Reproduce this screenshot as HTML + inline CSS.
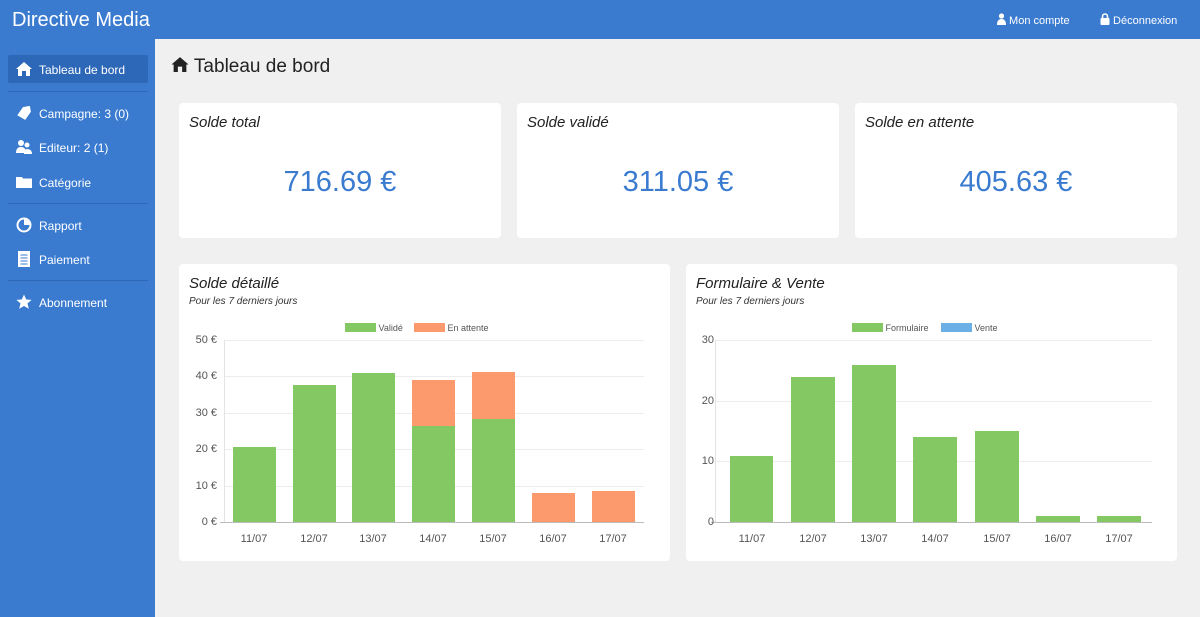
<!DOCTYPE html>
<html><head><meta charset="utf-8"><style>
*{margin:0;padding:0;box-sizing:border-box}
body{width:1200px;height:617px;overflow:hidden;background:#f0f0f0;font-family:"Liberation Sans",sans-serif;position:relative}
.a{position:absolute}
#top{left:0;top:0;width:1200px;height:39px;background:#3a7bd0;color:#fff}
#side{left:0;top:39px;width:155px;height:578px;background:#3a7bd0;color:#fff}
.nav{position:absolute;left:8px;width:140px;height:28px;font-size:12px;line-height:30px;padding-left:31px;color:#fff}
.ic{position:absolute;left:8px;top:6px;width:16px;height:16px}
.sep{position:absolute;left:8px;width:140px;height:1px;background:#2d68b8}
.card{position:absolute;background:#fff;border-radius:4px}
.ct{position:absolute;left:10px;top:11px;font-style:italic;font-size:15px;color:#222}
.big{position:absolute;width:100%;text-align:center;top:63px;font-size:29px;color:#3a7bd0}
.sub{position:absolute;left:10px;top:32px;font-style:italic;font-size:10px;color:#333}
.g{background:#84c863}.o{background:#fd9a6d}
.gl{position:absolute;height:1px;background:#ececec}
.yl{position:absolute;font-size:11px;color:#555;text-align:right;width:40px}
.xl{position:absolute;font-size:11px;color:#555;width:50px;text-align:center;top:533px}
.lg{position:absolute;font-size:9px;color:#555}
</style></head><body>
<div id="top" class="a">
<div class="a" style="left:12px;top:9px;font-size:20px">Directive Media</div>
<div class="a" style="left:997px;top:13px;font-size:11px">
<svg width="9" height="12" viewBox="0 0 9 12" style="vertical-align:-1px"><circle cx="4.5" cy="3" r="2.6" fill="#fff"/><path d="M0 12 Q0 6 4.5 6 Q9 6 9 12Z" fill="#fff"/></svg> Mon compte</div>
<div class="a" style="left:1100px;top:13px;font-size:11px">
<svg width="10" height="12" viewBox="0 0 10 12" style="vertical-align:-1px"><path d="M2.5 5V3.5a2.5 2.5 0 0 1 5 0V5" stroke="#fff" stroke-width="1.6" fill="none"/><rect x="0.5" y="5" width="9" height="7" rx="1" fill="#fff"/></svg> Déconnexion</div>
</div>
<div id="side" class="a">
<div class="nav" style="top:16px;background:#2d68b8;border-radius:2px"><svg class="ic" viewBox="0 0 16 16"><path d="M8 1 L0 8 L2 8 L2 15 L6 15 L6 10 L10 10 L10 15 L14 15 L14 8 L16 8Z" fill="#fff"/></svg>Tableau de bord</div>
<div class="sep" style="top:52px"></div>
<div class="nav" style="top:60px"><svg class="ic" viewBox="0 0 16 16"><path d="M1 9 L8 2 L15 2 L15 8 L8 15Z" fill="#fff" transform="rotate(-10 8 8)"/></svg>Campagne: 3 (0)</div>
<div class="nav" style="top:94px"><svg class="ic" viewBox="0 0 16 16"><circle cx="5" cy="4" r="3" fill="#fff"/><circle cx="11" cy="6" r="2.5" fill="#fff"/><path d="M0 14 Q0 8 5 8 Q10 8 10 14Z M8 15 Q8 10 11 10 Q16 10 16 15Z" fill="#fff"/></svg>Editeur: 2 (1)</div>
<div class="nav" style="top:129px"><svg class="ic" viewBox="0 0 16 16"><path d="M0 3 L6 3 L7 4.5 L16 4.5 L16 14 L0 14Z" fill="#fff"/></svg>Catégorie</div>
<div class="sep" style="top:164px"></div>
<div class="nav" style="top:172px"><svg class="ic" viewBox="0 0 16 16"><circle cx="8" cy="8" r="6.5" fill="none" stroke="#fff" stroke-width="2"/><path d="M8 8 L8 1.5 A6.5 6.5 0 0 1 14.5 8Z" fill="#fff"/></svg>Rapport</div>
<div class="nav" style="top:206px"><svg class="ic" viewBox="0 0 16 16"><rect x="2" y="0" width="12" height="16" fill="#fff"/><path d="M4.5 4h7M4.5 7h7M4.5 10h7M4.5 13h7" stroke="#3a7bd0" stroke-width="1"/></svg>Paiement</div>
<div class="sep" style="top:241px"></div>
<div class="nav" style="top:249px"><svg class="ic" viewBox="0 0 16 16"><path d="M8 0.5 L10.2 5.5 L15.6 5.9 L11.5 9.4 L12.8 14.8 L8 12 L3.2 14.8 L4.5 9.4 L0.4 5.9 L5.8 5.5Z" fill="#fff"/></svg>Abonnement</div>
</div>
<div class="a" style="left:171px;top:56px;font-size:19px;color:#222"><svg width="18" height="17" viewBox="0 0 16 16" style="vertical-align:-1px"><path d="M8 1 L0 8 L2 8 L2 15 L6 15 L6 10 L10 10 L10 15 L14 15 L14 8 L16 8Z" fill="#222"/></svg> Tableau de bord</div>

<div class="card" style="left:179px;top:103px;width:322px;height:135px"><div class="ct">Solde total</div><div class="big">716.69 €</div></div>
<div class="card" style="left:517px;top:103px;width:322px;height:135px"><div class="ct">Solde validé</div><div class="big">311.05 €</div></div>
<div class="card" style="left:855px;top:103px;width:322px;height:135px"><div class="ct">Solde en attente</div><div class="big">405.63 €</div></div>

<div class="card" style="left:179px;top:264px;width:491px;height:297px"><div class="ct">Solde détaillé</div><div class="sub">Pour les 7 derniers jours</div></div>
<div class="card" style="left:686px;top:264px;width:491px;height:297px"><div class="ct">Formulaire &amp; Vente</div><div class="sub">Pour les 7 derniers jours</div></div>

<!-- left chart -->
<div class="lg" style="left:345px;top:323px"><span class="g" style="display:inline-block;width:31px;height:9px;vertical-align:-1px"></span> Validé</div>
<div class="lg" style="left:414px;top:323px"><span class="o" style="display:inline-block;width:31px;height:9px;vertical-align:-1px"></span> En attente</div>
<div class="gl" style="left:224px;width:420px;top:340px"></div>
<div class="gl" style="left:224px;width:420px;top:376px"></div>
<div class="gl" style="left:224px;width:420px;top:413px"></div>
<div class="gl" style="left:224px;width:420px;top:449px"></div>
<div class="gl" style="left:224px;width:420px;top:486px"></div>
<div class="a" style="left:224px;top:340px;width:1px;height:182px;background:#e4e4e4"></div>
<div class="a" style="left:220px;top:522px;width:424px;height:1px;background:#bbb"></div>
<div class="yl" style="left:177px;top:334px">50 €</div>
<div class="yl" style="left:177px;top:370px">40 €</div>
<div class="yl" style="left:177px;top:407px">30 €</div>
<div class="yl" style="left:177px;top:443px">20 €</div>
<div class="yl" style="left:177px;top:480px">10 €</div>
<div class="yl" style="left:177px;top:516px">0 €</div>
<div class="a g" style="left:233px;top:447px;width:43px;height:75px"></div>
<div class="a g" style="left:293px;top:385px;width:43px;height:137px"></div>
<div class="a g" style="left:352px;top:373px;width:43px;height:149px"></div>
<div class="a o" style="left:412px;top:380px;width:43px;height:46px"></div>
<div class="a g" style="left:412px;top:426px;width:43px;height:96px"></div>
<div class="a o" style="left:472px;top:372px;width:43px;height:47px"></div>
<div class="a g" style="left:472px;top:419px;width:43px;height:103px"></div>
<div class="a o" style="left:532px;top:493px;width:43px;height:29px"></div>
<div class="a o" style="left:592px;top:491px;width:43px;height:31px"></div>
<div class="xl" style="left:229px">11/07</div>
<div class="xl" style="left:289px">12/07</div>
<div class="xl" style="left:348px">13/07</div>
<div class="xl" style="left:408px">14/07</div>
<div class="xl" style="left:468px">15/07</div>
<div class="xl" style="left:528px">16/07</div>
<div class="xl" style="left:588px">17/07</div>

<!-- right chart -->
<div class="lg" style="left:852px;top:323px"><span class="g" style="display:inline-block;width:31px;height:9px;vertical-align:-1px"></span> Formulaire</div>
<div class="lg" style="left:941px;top:323px"><span style="display:inline-block;width:31px;height:9px;vertical-align:-1px;background:#6aafe6"></span> Vente</div>
<div class="gl" style="left:715px;width:437px;top:340px"></div>
<div class="gl" style="left:715px;width:437px;top:401px"></div>
<div class="gl" style="left:715px;width:437px;top:461px"></div>
<div class="a" style="left:715px;top:340px;width:1px;height:182px;background:#e4e4e4"></div>
<div class="a" style="left:711px;top:522px;width:441px;height:1px;background:#bbb"></div>
<div class="yl" style="left:674px;top:334px">30</div>
<div class="yl" style="left:674px;top:395px">20</div>
<div class="yl" style="left:674px;top:455px">10</div>
<div class="yl" style="left:674px;top:516px">0</div>
<div class="a g" style="left:730px;top:456px;width:43px;height:66px"></div>
<div class="a g" style="left:791px;top:377px;width:44px;height:145px"></div>
<div class="a g" style="left:852px;top:365px;width:44px;height:157px"></div>
<div class="a g" style="left:913px;top:437px;width:44px;height:85px"></div>
<div class="a g" style="left:975px;top:431px;width:44px;height:91px"></div>
<div class="a g" style="left:1036px;top:516px;width:44px;height:6px"></div>
<div class="a g" style="left:1097px;top:516px;width:44px;height:6px"></div>
<div class="xl" style="left:727px">11/07</div>
<div class="xl" style="left:788px">12/07</div>
<div class="xl" style="left:849px">13/07</div>
<div class="xl" style="left:910px">14/07</div>
<div class="xl" style="left:972px">15/07</div>
<div class="xl" style="left:1033px">16/07</div>
<div class="xl" style="left:1094px">17/07</div>
</body></html>
